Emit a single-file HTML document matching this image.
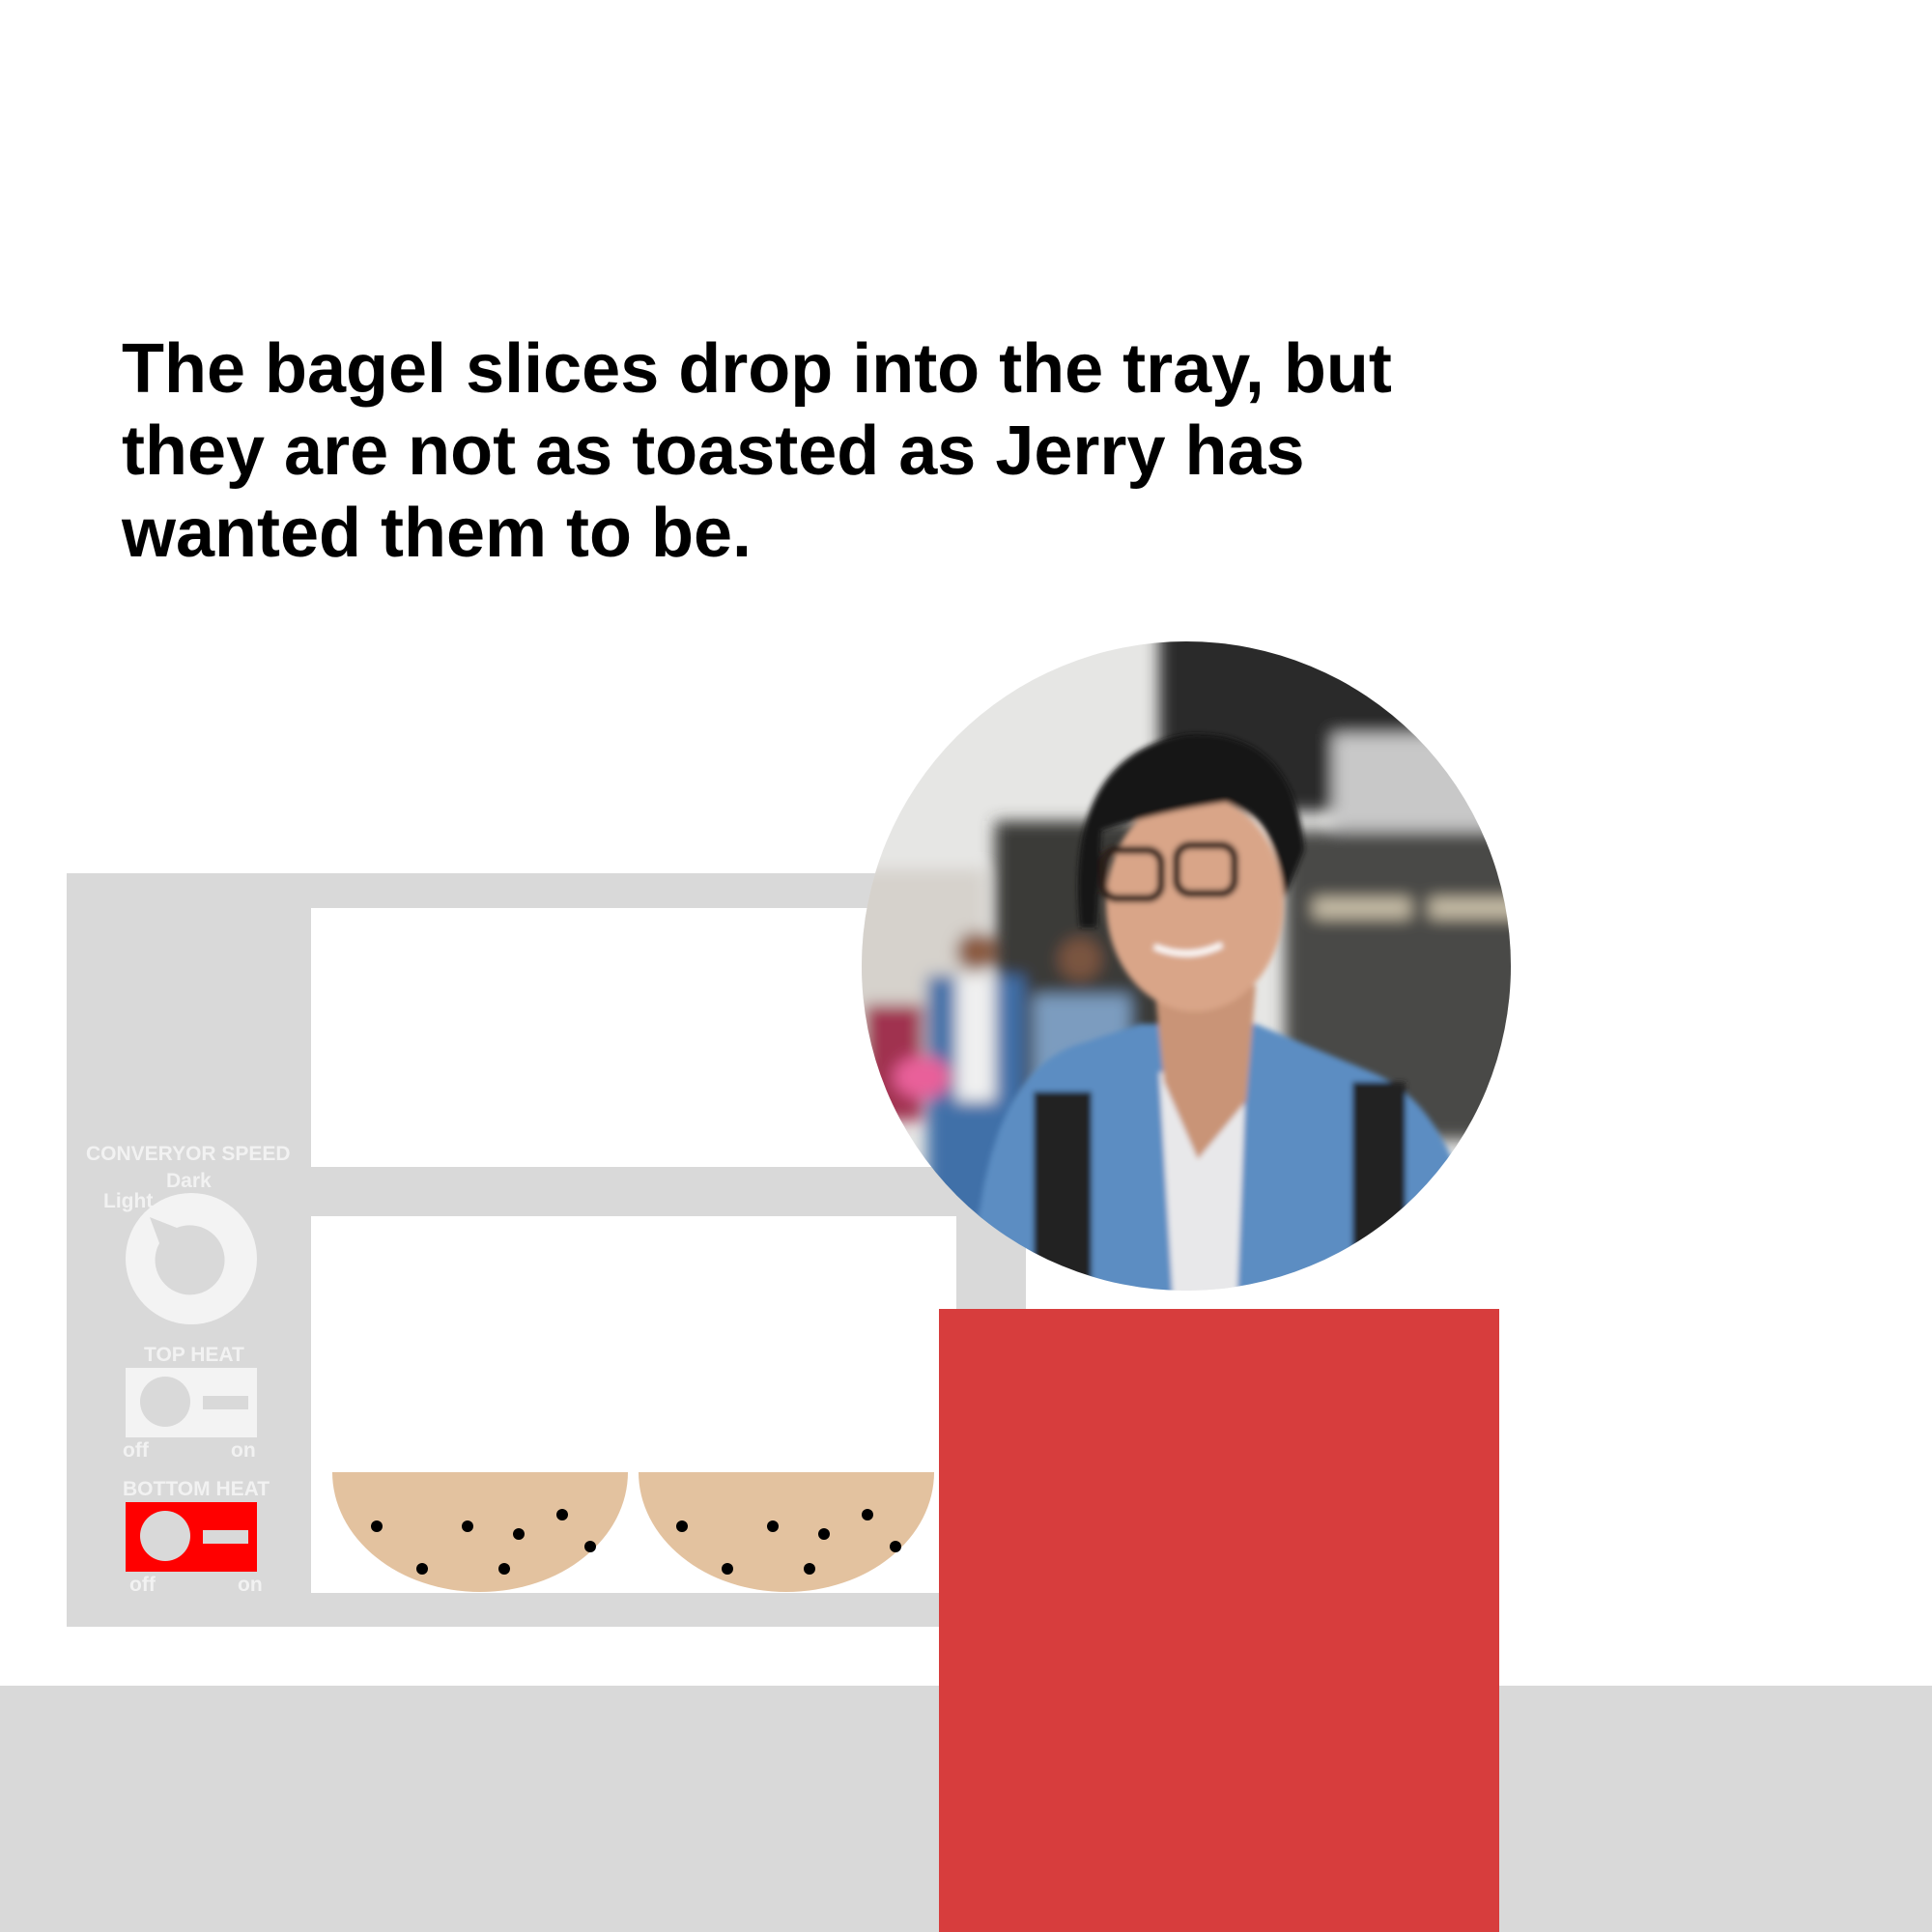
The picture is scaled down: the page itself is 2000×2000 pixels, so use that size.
<!DOCTYPE html>
<html><head><meta charset="utf-8"><style>
html,body{margin:0;padding:0;background:#fff}
body{width:2000px;height:2000px;position:relative;overflow:hidden;font-family:"Liberation Sans",Arial,sans-serif}
.a{position:absolute}
h1{position:absolute;left:126px;top:340px;margin:0;font-size:72px;line-height:85px;font-weight:bold;color:#000;letter-spacing:0px;width:1450px}
.lbl{position:absolute;color:#f2f2f2;font-weight:bold;font-size:21px;white-space:nowrap}
.bagel{position:absolute;background:#e3c29f;border-radius:0 0 50% 50%/0 0 100% 100%}
.dot{position:absolute;width:12px;height:12px;border-radius:50%;background:#000}
</style></head><body>
<h1>The bagel slices drop into the tray, but they are not as toasted as Jerry has wanted them to be.</h1>

<div class="a" style="left:0;top:1745px;width:2000px;height:255px;background:#d9d9d9"></div>
<div class="a" style="left:69px;top:904px;width:993px;height:780px;background:#d9d9d9"></div>
<div class="a" style="left:322px;top:940px;width:668px;height:268px;background:#fff"></div>
<div class="a" style="left:322px;top:1259px;width:668px;height:390px;background:#fff"></div>

<div class="bagel" style="left:344px;top:1524px;width:306px;height:124px"></div>
<div class="bagel" style="left:661px;top:1524px;width:306px;height:124px"></div>
<div class="dot" style="left:384px;top:1574px"></div>
<div class="dot" style="left:478px;top:1574px"></div>
<div class="dot" style="left:531px;top:1582px"></div>
<div class="dot" style="left:576px;top:1562px"></div>
<div class="dot" style="left:605px;top:1595px"></div>
<div class="dot" style="left:431px;top:1618px"></div>
<div class="dot" style="left:516px;top:1618px"></div>
<div class="dot" style="left:700px;top:1574px"></div>
<div class="dot" style="left:794px;top:1574px"></div>
<div class="dot" style="left:847px;top:1582px"></div>
<div class="dot" style="left:892px;top:1562px"></div>
<div class="dot" style="left:921px;top:1595px"></div>
<div class="dot" style="left:747px;top:1618px"></div>
<div class="dot" style="left:832px;top:1618px"></div>

<div class="lbl" style="left:89px;top:1183px">CONVERYOR SPEED</div>
<div class="lbl" style="left:172px;top:1211px">Dark</div>
<div class="lbl" style="left:107px;top:1232px">Light</div>
<svg class="a" style="left:0;top:0" width="400" height="2000" viewBox="0 0 400 2000">
<circle cx="198" cy="1303" r="68" fill="#f3f3f3"/>
<path d="M155 1260 L183 1271 A36 36 0 1 1 165 1287 Z" fill="#d9d9d9"/>
<rect x="130" y="1416" width="136" height="72" fill="#f3f3f3"/>
<circle cx="171" cy="1451" r="26" fill="#d9d9d9"/>
<rect x="210" y="1445" width="47" height="14" fill="#d9d9d9"/>
<rect x="130" y="1555" width="136" height="72" fill="#ff0000"/>
<circle cx="171" cy="1590" r="26" fill="#d9d9d9"/>
<rect x="210" y="1584" width="47" height="14" fill="#d9d9d9"/>
</svg>
<div class="lbl" style="left:149px;top:1391px">TOP HEAT</div>
<div class="lbl" style="left:127px;top:1490px">off</div>
<div class="lbl" style="left:239px;top:1490px">on</div>
<div class="lbl" style="left:127px;top:1530px">BOTTOM HEAT</div>
<div class="lbl" style="left:134px;top:1629px">off</div>
<div class="lbl" style="left:246px;top:1629px">on</div>

<div class="a" style="left:972px;top:1355px;width:580px;height:645px;background:#d73d3d"></div>

<svg class="a" style="left:0;top:0" width="2000" height="2000" viewBox="0 0 2000 2000">
<defs>
<clipPath id="c"><circle cx="1228" cy="1000" r="336"/></clipPath>
<filter id="b"><feGaussianBlur stdDeviation="8"/></filter>
<filter id="b2"><feGaussianBlur stdDeviation="3"/></filter>
</defs>
<g clip-path="url(#c)">
<rect x="880" y="660" width="700" height="700" fill="#e6e6e4"/>
<g filter="url(#b)">
<rect x="1200" y="640" width="400" height="200" fill="#2b2b2b"/>
<rect x="1380" y="760" width="220" height="100" fill="#c8c8c8"/>
<rect x="1030" y="850" width="200" height="300" fill="#3a3a38"/>
<rect x="1330" y="860" width="260" height="320" fill="#4a4a46"/>
<rect x="1360" y="930" width="100" height="20" fill="#c9bfa8"/>
<rect x="1480" y="930" width="100" height="20" fill="#c9bfa8"/>
<rect x="880" y="900" width="140" height="200" fill="#d6d2cc"/>
<rect x="960" y="1010" width="100" height="260" fill="#3f6fa8"/>
<rect x="990" y="1010" width="40" height="130" fill="#f0f0f0"/>
<rect x="1070" y="1030" width="100" height="200" fill="#7b9cbf"/>
<circle cx="1010" cy="985" r="20" fill="#8a5a40"/>
<circle cx="1118" cy="993" r="22" fill="#7a5540"/>
<rect x="895" y="1040" width="60" height="120" fill="#a03050"/>
<ellipse cx="955" cy="1115" rx="30" ry="22" fill="#e9609a"/>
</g>
<g filter="url(#b2)">
<path d="M1006 1360 Q1010 1110 1120 1080 L1180 1060 L1300 1060 L1420 1110 Q1520 1150 1540 1360 Z" fill="#5b8dc2"/>
<rect x="1070" y="1130" width="60" height="240" fill="#222"/>
<rect x="1400" y="1120" width="55" height="240" fill="#222"/>
<path d="M1200 1110 L1290 1110 L1280 1360 L1215 1360 Z" fill="#e8e8ea"/>
<path d="M1195 1020 L1300 1020 L1290 1140 L1240 1200 L1205 1120 Z" fill="#c99477"/>
<ellipse cx="1237" cy="935" rx="92" ry="112" fill="#d9a588"/>
<path d="M1118 960 Q1100 780 1230 760 Q1340 755 1350 880 L1330 930 Q1320 840 1270 830 Q1200 840 1140 860 L1135 960 Z" fill="#141414"/>
<rect x="1142" y="880" width="60" height="50" rx="14" fill="none" stroke="#2a1a12" stroke-width="8"/>
<rect x="1218" y="875" width="60" height="50" rx="14" fill="none" stroke="#2a1a12" stroke-width="8"/>
<path d="M1195 980 Q1230 995 1265 978" stroke="#fff" stroke-width="6" fill="none"/>
</g>
</g>
</svg>
</body></html>
